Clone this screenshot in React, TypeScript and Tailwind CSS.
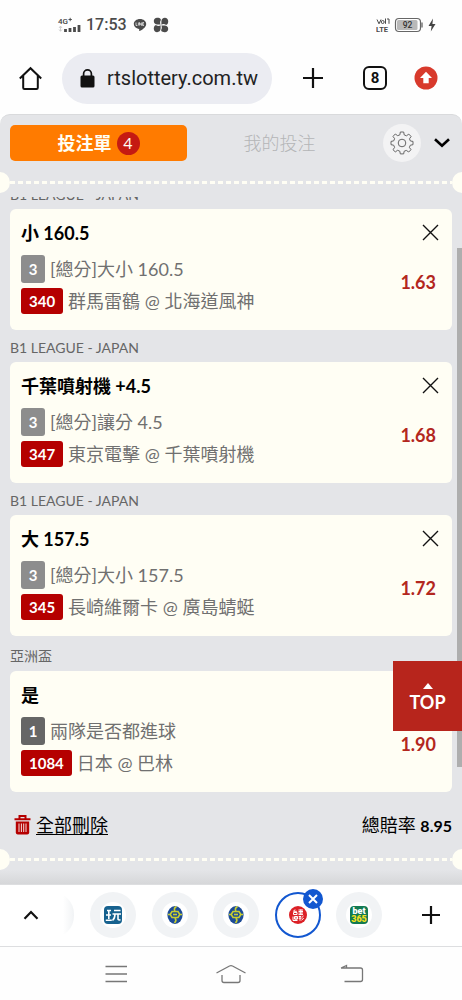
import React from "react";

type Bet = {
  league: string;
  pick: string;
  legs: string;
  dark?: boolean;
  market: string;
  code: string;
  match: string;
  odds: string;
};

const bets: Bet[] = [
  { league: "B1 LEAGUE - JAPAN", pick: "小 160.5", legs: "3", market: "[總分]大小 160.5", code: "340", match: "群馬雷鶴 @ 北海道風神", odds: "1.63" },
  { league: "B1 LEAGUE - JAPAN", pick: "千葉噴射機 +4.5", legs: "3", market: "[總分]讓分 4.5", code: "347", match: "東京電擊 @ 千葉噴射機", odds: "1.68" },
  { league: "B1 LEAGUE - JAPAN", pick: "大 157.5", legs: "3", market: "[總分]大小 157.5", code: "345", match: "長崎維爾卡 @ 廣島蜻蜓", odds: "1.72" },
  { league: "亞洲盃", pick: "是", legs: "1", dark: true, market: "兩隊是否都進球", code: "1084", match: "日本 @ 巴林", odds: "1.90" },
];

const petal = "M7.700 7.600C6.900 6.600 6.900 4.400 7.800 3.200V2.200C7 1.100 5.500.7 4 .8 2.200.9.8 2.200.8 4.100c0 2 1.400 3.500 3.600 3.500z";

function StatusBar() {
  return (
    <div className="flex h-[50px] items-center justify-between pl-[57px] pr-[25px] text-[#4b4b4b]">
      <div className="flex items-center">
        <svg width="26" height="18" viewBox="0 0 26 18" aria-hidden="true">
          <text x="1" y="8" fontSize="8" fontWeight="500" fontFamily="Roboto, sans-serif" fill="#444">4G</text>
          <path d="M11.500 3.500h3.400M13.200 1.800v3.400" stroke="#444" strokeWidth="0.9" />
          <path d="M3.500 10v5M2 12l1.500-2L5 12M2 13.500l1.500 1.800L5 13.500" stroke="#ccc" strokeWidth="0.9" fill="none" />
          <path d="M8.500 16v-3M13 16v-4M17.500 16v-5M22 16v-7" stroke="#4b4b4b" strokeWidth="2.800" />
        </svg>
        <span className="ml-[3px] text-base font-medium">17:53</span>
        <svg className="ml-[6px]" width="14" height="14" viewBox="0 0 14 14" aria-hidden="true">
          <path d="M7 1C3.500 1 .8 3.200.8 6c0 2.500 2.200 4.500 5.100 4.900.5.1.4 1 .3 1.800 0 .3.2.5.6.3C9 12 13.200 9.300 13.200 6 13.200 3.200 10.500 1 7 1z" fill="#4b4b4b" />
          <path d="M3 4.500v3h1.400M5.400 4.500v3M6.500 7.500v-3l1.900 3v-3M11 4.500H9.600v3H11M9.600 6H11" stroke="#fff" strokeWidth="0.700" fill="none" />
        </svg>
        <svg className="ml-[6px]" width="16" height="16" viewBox="0 0 16 16" fill="#4b4b4b" aria-hidden="true">
          <path d={petal} />
          <path d={petal} transform="rotate(90 8 8)" />
          <path d={petal} transform="rotate(180 8 8)" />
          <path d={petal} transform="rotate(270 8 8)" />
        </svg>
      </div>
      <div className="flex items-center">
        <svg width="14" height="16" viewBox="0 0 14 16" aria-hidden="true">
          <path d="M1 2.500l2 4.300 2-4.300M9.500 1.500v5.300M11 2h2v4.800" stroke="#4b4b4b" strokeWidth="1" fill="none" />
          <circle cx="6.700" cy="5" r="1.500" stroke="#4b4b4b" strokeWidth="1" fill="none" />
          <text x="0" y="15" fontSize="7.500" fontWeight="700" fontFamily="Roboto, sans-serif" fill="#4b4b4b">LTE</text>
        </svg>
        <svg className="ml-1" width="30" height="16" viewBox="0 0 30 16" aria-hidden="true">
          <rect x="1.500" y="1.500" width="25" height="13" rx="3.500" fill="#fff" stroke="#666" strokeWidth="1.200" />
          <rect x="3" y="3" width="20.500" height="10" rx="1.500" fill="#b9b9b9" />
          <path d="M28 5.500v5" stroke="#777" strokeWidth="1.500" />
          <text x="13.500" y="11" textAnchor="middle" fontSize="8.500" fontWeight="500" fontFamily="Roboto, sans-serif" fill="#333">92</text>
        </svg>
        <svg className="ml-[3px]" width="10" height="14" viewBox="0 0 10 14" aria-hidden="true">
          <path d="M6 .5L1.500 8H4.600L3.800 13.500 8.500 6H5.400z" fill="#444" />
        </svg>
      </div>
    </div>
  );
}

function BrowserBar() {
  return (
    <div className="flex h-16 items-center pb-2 pl-[18px] pr-[24px]">
      <button aria-label="首頁" className="flex size-[26px] items-center justify-center">
        <svg width="26" height="26" viewBox="0 0 26 26" fill="none" stroke="#111" strokeWidth="2">
          <path d="M1.800 13.500L12.500 3.200l10.700 10.300M5.200 10.700v12q0 1.300 1.300 1.300h12q1.300 0 1.300-1.300v-12" />
        </svg>
      </button>
      <div className="ml-[18px] flex h-[51px] min-w-0 flex-1 items-center rounded-full bg-[#ebecf2] pl-[18px] pr-2">
        <svg width="15" height="19" viewBox="0 0 15 19" className="shrink-0" aria-hidden="true">
          <rect x="0.500" y="6.500" width="14" height="12" rx="1.500" fill="#111" />
          <path d="M3.600 7V4.800a3.900 3.900 0 0 1 7.800 0V7" fill="none" stroke="#111" strokeWidth="1.700" />
        </svg>
        <input aria-label="網址" defaultValue="rtslottery.com.tw" className="ml-3 w-full min-w-0 bg-transparent text-[20px] leading-6 text-[#222] outline-none" />
      </div>
      <button aria-label="新增分頁" className="ml-[31px]">
        <svg width="20" height="20" viewBox="0 0 20 20" stroke="#111" strokeWidth="2.200"><path d="M10 0v20M0 10h20" /></svg>
      </button>
      <button className="ml-10 flex size-6 items-center justify-center rounded-md border-2 border-[#111] text-[15px] font-bold leading-none text-[#111]">8</button>
      <button aria-label="更新" className="ml-[27px]">
        <svg width="24" height="24" viewBox="0 0 24 24"><circle cx="12" cy="12" r="11.500" fill="#d83a2c" /><path d="M12 5.800l6 6.200h-3.300v5.300H9.300V12H6z" fill="#fff" /></svg>
      </button>
    </div>
  );
}

function TicketEdge() {
  return (
    <div className="flex h-[21px] items-center overflow-hidden">
      <span className="-ml-[11px] size-[21px] shrink-0 rounded-full bg-[#fffef4]" />
      <span className="h-[3px] flex-1 bg-[repeating-linear-gradient(90deg,#fffef4_0_5px,transparent_5px_8px)]" />
      <span className="-mr-[11px] size-[21px] shrink-0 rounded-full bg-[#fffef4]" />
    </div>
  );
}

function BetCard({ bet, index }: { bet: Bet; index: number }) {
  const label = index === 0 ? "h-3" : bet.dark ? "h-[35px] pb-px" : "h-8";
  return (
    <li>
      <div className={`flex items-end overflow-hidden text-sm leading-7 text-[#666] ${label}`}>{bet.league}</div>
      <article className="flex h-[121px] justify-between rounded-md bg-[#fffef4] pl-[11px] pr-[13px]">
        <div className="pt-2.5">
          <h3 className="text-lg font-bold leading-7 text-black">{bet.pick}</h3>
          <div className="mt-2 flex items-center">
            <span className={`flex h-7 w-6 items-center justify-center rounded-[3px] text-[15px] font-bold text-white ${bet.dark ? "bg-[#666]" : "bg-[#8d8d8d]"}`}>{bet.legs}</span>
            <span className="ml-[5px] text-[18px] leading-7 text-[#707070]">{bet.market}</span>
          </div>
          <div className="mt-[5px] flex items-center">
            <span className="flex h-[26px] items-center rounded-[3px] bg-[#b50000] px-2 text-[15px] font-bold text-white">{bet.code}</span>
            <span className="ml-[5px] text-[18px] leading-[26px] text-[#707070]">{bet.match}</span>
          </div>
        </div>
        <div className="flex flex-col items-end pt-[15px]">
          <button aria-label="刪除">
            <svg width="17" height="17" viewBox="0 0 17 17" stroke="#111" strokeWidth="1.400"><path d="M1 1l15 15M16 1L1 16" /></svg>
          </button>
          <strong className="mr-[3px] mt-[29px] text-lg leading-6 text-[#b3271e]">{bet.odds}</strong>
        </div>
      </article>
    </li>
  );
}

function BetSlip() {
  return (
    <main className="relative bg-white font-[Lato,'Noto_Sans_CJK_TC',sans-serif]">
      <div className="rounded-t-[10px] border-t border-[#d9dadc] bg-[#e4e5e8]">
        <div className="flex items-center px-2.5 pt-[9px]">
          <div className="flex flex-1 gap-1">
            <button className="flex h-9 flex-1 items-center justify-center rounded-[5px] bg-[#ff7b00] text-lg font-bold text-[#fffef4]">
              投注單
              <span className="ml-[5px] flex size-[23px] items-center justify-center rounded-full bg-[#c51a12] text-base font-normal">4</span>
            </button>
            <button className="h-9 flex-1 text-lg font-light text-[#b4b5b7]">我的投注</button>
          </div>
          <button aria-label="設定" className="ml-[15px] flex size-[38px] items-center justify-center rounded-full bg-[#f3f3f4]">
            <svg width="24" height="24" viewBox="0 0 24 24" fill="none" stroke="#666" strokeWidth="1" strokeLinejoin="round">
              <circle cx="12" cy="12" r="3.800" />
              <path d="M10.300 1h3.400l.5 2.900 2.200.9 2.400-1.700 2.300 2.400-1.600 2.300.9 2.200 2.600.4v3.300l-2.700.5-.9 2.200 1.600 2.300-2.300 2.300-2.400-1.600-2.200.9-.4 2.600h-3.400l-.5-2.700-2.200-.9-2.300 1.600L3 18.700l1.600-2.300-.9-2.200L1 13.700v-3.300l2.700-.5.9-2.200L3 5.400 5.300 3l2.400 1.700 2.200-.9z" />
            </svg>
          </button>
          <button aria-label="收合" className="ml-[11px] flex w-5 justify-center">
            <svg width="18" height="12" viewBox="0 0 18 12" fill="none" stroke="#000" strokeWidth="2.600"><path d="M2 2.200l7 6.600 7-6.600" /></svg>
          </button>
        </div>
        <div className="pt-[10px]">
          <TicketEdge />
        </div>
        <ul className="mt-1 px-2.5">
          {bets.map((bet, i) => (
            <BetCard key={bet.code} bet={bet} index={i} />
          ))}
        </ul>
        <div className="flex h-[57px] items-center justify-between px-2.5 pt-3 pb-1 text-lg text-black">
          <button className="flex items-center pl-1">
            <svg width="17" height="20" viewBox="0 0 17 20" aria-hidden="true">
              <path d="M5.500 3.500V1h6v2.500M0.500 4.300h16" stroke="#b50000" strokeWidth="2" fill="none" />
              <path d="M1.800 6.500h13.400v11q0 2-2 2H3.800q-2 0-2-2z" fill="#b50000" />
              <path d="M5 8.500v8.500M7.400 8.500v8.500M9.700 8.500v8.500M12 8.500v8.500" stroke="#f3dcdc" strokeWidth="1" />
            </svg>
            <span className="ml-[5px] underline underline-offset-2">全部刪除</span>
          </button>
          <p>
            總賠率 <strong className="text-base font-bold">8.95</strong>
          </p>
        </div>
        <TicketEdge />
        <div className="h-3.5 bg-linear-to-b from-[#e4e5e8] to-[#d6d7d9]" />
      </div>
      <div className="absolute right-0 top-[134px] h-[519px] w-[5px] bg-[#aeaeae]" />
      <a href="#top" className="absolute right-0 top-[547px] flex h-[70px] w-[69px] flex-col items-center justify-center bg-[#b7251c] pt-1 text-lg font-bold leading-6 text-white">
        <svg width="12" height="8" viewBox="0 0 12 8" aria-hidden="true"><path d="M6 1l5 6H1z" fill="#fff" /></svg>
        TOP
      </a>
    </main>
  );
}

function PlayIcon() {
  return (
    <svg width="18" height="18" viewBox="0 0 18 18" aria-hidden="true">
      <rect width="18" height="18" rx="4" fill="#17628f" />
      <path d="M3 4.500h4M2 9h5M4.800 4.500v8.500M1.800 14.300h6M10 4.500h6.500M8.500 8H17M11 8c0 3.500-.7 5-2.500 6.500M14 8v5q0 1.300 2.500.8" stroke="#fff" strokeWidth="1.600" fill="none" />
    </svg>
  );
}

function BallIcon() {
  return (
    <svg width="18" height="20" viewBox="0 0 18 20" aria-hidden="true">
      <ellipse cx="9" cy="10" rx="7.600" ry="9" fill="#1d4c96" />
      <path d="M2 9.500h2.200L6 6.500h6l1.800 3H16M4.200 9.500L6 12.500h6l1.800-3M10.500 1.500Q7.500 3 8.800 6M9 13q2 2.500-.5 5" fill="none" stroke="#c9cf2f" strokeWidth="1.600" />
      <path d="M7 9.500h4" stroke="#c9cf2f" strokeWidth="1.600" />
    </svg>
  );
}

function LotteryIcon() {
  return (
    <svg width="18" height="18" viewBox="0 0 18 18" aria-hidden="true">
      <circle cx="9" cy="9" r="9" fill="#dc2127" />
      <g stroke="#fff" strokeWidth="1" fill="none">
        <path d="M6 3.500L4.500 5.300h3.300M4.500 6.500h3.500v2h-3.500zM9.500 4h4.500M9.500 5.500h4.500M9.500 7h4.500M9.500 8.600h4.500M11.800 3.500v5" />
        <path d="M4 10.500v4h4.500M5.500 10.500h3v2.600h-3zM7 10v4M9.700 10.500h2.500M9.700 12.200h2.800M11 10.500v4.200M14.500 10l-1.800 1.600M14.700 12l-2.200 2.400" />
      </g>
    </svg>
  );
}

function Bet365Icon() {
  return (
    <span className="flex size-[18px] flex-col items-center justify-center rounded bg-[#137a52] text-[9px] font-black leading-[8px]">
      <span className="text-white">bet</span>
      <span className="text-[#f5e01d]">365</span>
    </span>
  );
}

function Tab({ name, children }: { name: string; children: React.ReactNode }) {
  return (
    <button aria-label={name} className="flex size-[46px] items-center justify-center rounded-full bg-[#f1f3f5]">
      <span className="flex size-[26px] items-center justify-center rounded-full bg-white">{children}</span>
    </button>
  );
}

function TabStrip() {
  return (
    <div className="flex h-[63px] items-center border-y border-[#dddee0] bg-white pb-px">
      <button aria-label="展開" className="ml-[22px] flex w-[18px] justify-center">
        <svg width="16" height="10" viewBox="0 0 16 10" fill="none" stroke="#111" strokeWidth="2.200"><path d="M1.500 8.700L8 2l6.500 6.700" /></svg>
      </button>
      <div className="ml-3 h-[46px] w-[22px] rounded-r-full bg-linear-to-r from-white from-50% to-[#f1f3f5]" />
      <div className="ml-4 flex flex-1 justify-between">
        <Tab name="玩運彩"><PlayIcon /></Tab>
        <Tab name="分頁二"><BallIcon /></Tab>
        <Tab name="分頁三"><BallIcon /></Tab>
        <div className="relative">
          <button aria-label="台灣運彩" className="flex size-[46px] items-center justify-center rounded-full border-2 border-[#1257d0] bg-white"><LotteryIcon /></button>
          <button aria-label="關閉分頁" className="absolute -right-0.5 -top-[3px] flex size-5 items-center justify-center rounded-full bg-[#1257d0]">
            <svg width="12" height="12" viewBox="0 0 12 12" stroke="#fff" strokeWidth="2"><path d="M2 2l8 8M10 2l-8 8" /></svg>
          </button>
        </div>
        <Tab name="bet365"><Bet365Icon /></Tab>
      </div>
      <button aria-label="開新分頁" className="ml-10 mr-[22px]">
        <svg width="18" height="18" viewBox="0 0 18 18" stroke="#111" strokeWidth="2.200"><path d="M9 0v18M0 9h18" /></svg>
      </button>
    </div>
  );
}

function SystemNav() {
  return (
    <nav className="flex h-[53px] items-center justify-between bg-[#fefefe] px-[98px]">
      <button aria-label="最近使用">
        <svg width="36" height="20" viewBox="0 0 36 20" stroke="#777" strokeWidth="1.300"><path d="M7.500 2.500h21.500M7.500 10h21.500M7.500 17.500h21.500" /></svg>
      </button>
      <button aria-label="主畫面">
        <svg width="36" height="22" viewBox="-2 0 36 22" fill="none" stroke="#777" strokeWidth="1.300"><path d="M1.500 10L14.500 3q1.500-.8 3 0L30.500 10M7 12v5.500q0 2 2 2h14q2 0 2-2V12" /></svg>
      </button>
      <button aria-label="返回">
        <svg width="36" height="20" viewBox="-12 0 36 20" fill="none" stroke="#777" strokeWidth="1.300"><path d="M1 4h19.500q2 0 2 2v9.500q0 2-2 2H4.500M1 4L6.500 1.500V4" /></svg>
      </button>
    </nav>
  );
}

export default function App() {
  return (
    <div id="top" className="min-h-screen bg-[#fefefe] font-[Roboto,'Noto_Sans_CJK_TC',sans-serif]">
      <StatusBar />
      <BrowserBar />
      <BetSlip />
      <TabStrip />
      <SystemNav />
    </div>
  );
}
